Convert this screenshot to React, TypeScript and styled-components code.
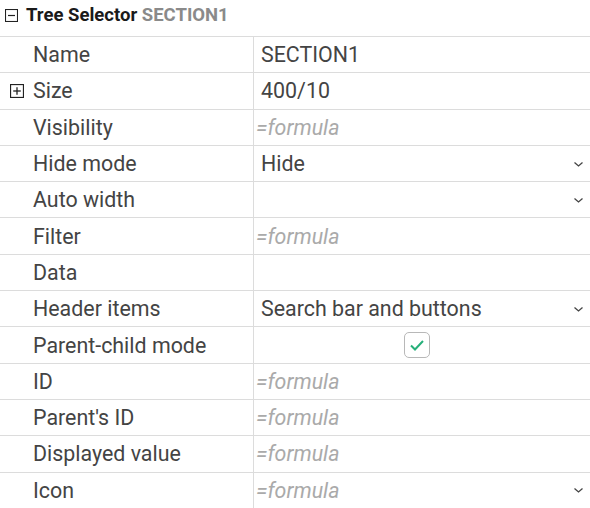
import React from "react";
import styled, { createGlobalStyle } from "styled-components";

const Global = createGlobalStyle`
  html, body { margin: 0; padding: 0; background: #fff; }
  body { font-family: Roboto, "Noto Sans", sans-serif; }
`;

const Panel = styled.div`
  width: 590px;
  display: flex;
  flex-direction: column;
`;

const Header = styled.div`
  height: 36px;
  display: flex;
  align-items: center;
  gap: 8px;
  padding-left: 5px;
  box-sizing: border-box;
  font-size: 18.5px;
  font-weight: 700;
  color: #1a1a1a;
  padding-bottom: 6px;
`;

const Sub = styled.span`
  color: #8a8a8a;
`;

const Table = styled.div`
  display: flex;
  flex-direction: column;
  border-top: 1px solid #dcdcdc;
`;

const Row = styled.div`
  display: grid;
  grid-template-columns: 254px 1fr;
  height: 36.3px;
  box-sizing: border-box;
  border-bottom: 1px solid #dcdcdc;
`;

const Label = styled.div<{ $indent: number }>`
  display: flex;
  align-items: center;
  gap: 9px;
  padding-left: ${(p) => p.$indent}px;
  font-size: 21.4px;
  color: #444;
  border-right: 1px solid #dcdcdc;
`;

const Value = styled.div<{ $formula?: boolean; $center?: boolean }>`
  display: flex;
  align-items: center;
  justify-content: ${(p) => (p.$center ? "center" : "space-between")};
  padding-left: ${(p) => (p.$formula ? 2 : 7)}px;
  padding-right: 5px;
  font-size: 21.4px;
  color: ${(p) => (p.$formula ? "#aaa" : "#444")};
  font-style: ${(p) => (p.$formula ? "italic" : "normal")};
`;

const Check = styled.div`
  width: 26px;
  height: 26px;
  box-sizing: border-box;
  border: 1px solid #b8b8b8;
  border-radius: 5px;
  display: flex;
  align-items: center;
  justify-content: center;
  margin-right: 12px;
`;

const BoxIcon = ({ plus, size = 13 }: { plus?: boolean; size?: number }) => (
  <svg width={size} height={size} viewBox="0 0 13 13">
    <rect x="0.5" y="0.5" width="12" height="12" fill="none" stroke="#222" strokeWidth="1.1" />
    <line x1="3" y1="6.5" x2="10" y2="6.5" stroke="#222" strokeWidth="1.2" />
    {plus && <line x1="6.5" y1="3" x2="6.5" y2="10" stroke="#222" strokeWidth="1.2" />}
  </svg>
);

const Chevron = () => (
  <svg width="13" height="12" viewBox="0 0 13 12">
    <path d="M2.5 4.5 L6.5 8 L10.5 4.5" fill="none" stroke="#444" strokeWidth="1.3" />
  </svg>
);

type R = { label: string; value?: string; formula?: boolean; select?: boolean; check?: boolean; plus?: boolean };

const rows: R[] = [
  { label: "Name", value: "SECTION1" },
  { label: "Size", value: "400/10", plus: true },
  { label: "Visibility", value: "=formula", formula: true },
  { label: "Hide mode", value: "Hide", select: true },
  { label: "Auto width", value: "", select: true },
  { label: "Filter", value: "=formula", formula: true },
  { label: "Data", value: "" },
  { label: "Header items", value: "Search bar and buttons", select: true },
  { label: "Parent-child mode", check: true },
  { label: "ID", value: "=formula", formula: true },
  { label: "Parent's ID", value: "=formula", formula: true },
  { label: "Displayed value", value: "=formula", formula: true },
  { label: "Icon", value: "=formula", formula: true, select: true },
];

export default function App() {
  return (
    <>
      <Global />
      <Panel>
        <Header>
          <BoxIcon />
          <span>
            Tree Selector <Sub>SECTION1</Sub>
          </span>
        </Header>
        <Table>
          {rows.map((r) => (
            <Row key={r.label}>
              <Label $indent={r.plus ? 10 : 33}>
                {r.plus && <BoxIcon plus size={14} />}
                {r.label}
              </Label>
              {r.check ? (
                <Value $center>
                  <Check>
                    <svg width="16" height="14" viewBox="0 0 16 14">
                      <path d="M2 7.5 L6 11.5 L14 3" fill="none" stroke="#27b07a" strokeWidth="2" />
                    </svg>
                  </Check>
                </Value>
              ) : (
                <Value $formula={r.formula}>
                  <span>{r.value}</span>
                  {r.select && <Chevron />}
                </Value>
              )}
            </Row>
          ))}
        </Table>
      </Panel>
    </>
  );
}
